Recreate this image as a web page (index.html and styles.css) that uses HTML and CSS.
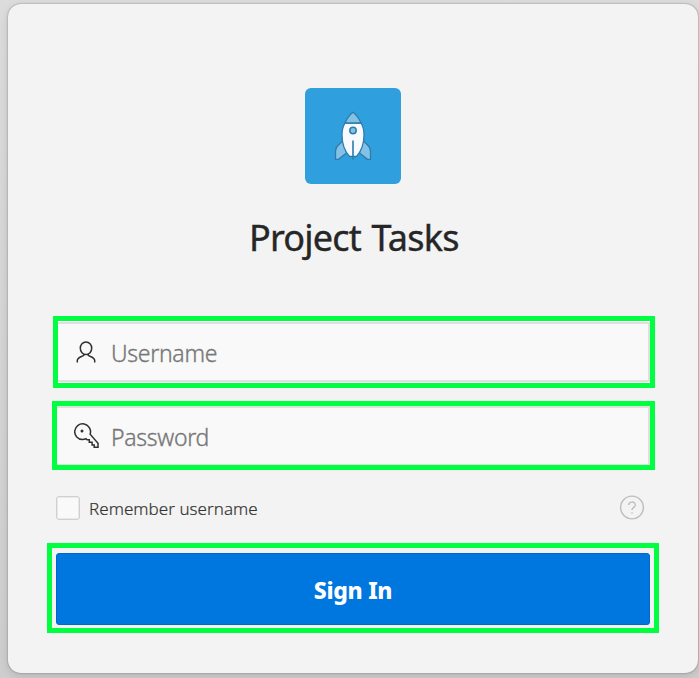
FILE: index.html
```html
<!DOCTYPE html>
<html lang="en">
<head>
<meta charset="utf-8">
<title>Project Tasks</title>
<link rel="stylesheet" href="styles.css">
</head>
<body>
<main class="card">
  <div class="logo">
    <svg width="40" height="52" viewBox="0 0 40 52" stroke="#2b7eab" stroke-width="1.3" stroke-linejoin="miter">
      <path d="M10.5 30 5 35.5Q2.5 38 2.5 41V49.3H5.5L13.5 43Z" fill="#84c1e7"/>
      <path d="M29.500 30 35 35.500Q37.500 38 37.500 41V49.300H34.500L26.500 43Z" fill="#84c1e7"/>
      <path d="M12 13Q9 18 9 25C9 35 12.500 42 16.500 46.500H23.500C27.500 42 31 35 31 25Q31 18 28 13Z" fill="#f7fbff"/>
      <path d="M12 13Q15 6 20 2.300Q25 6 28 13Z" fill="#84c1e7"/>
      <circle cx="20" cy="20.500" r="3.200" fill="#84c1e7" stroke-width="1.500"/>
      <path d="M20 30.500V49.500" fill="none" stroke-width="1.600"/>
    </svg>
  </div>
  <h1 class="title">Project Tasks</h1>
  <form class="form">
    <label class="frame user">
      <span class="field">
        <svg class="icon" width="26" height="26" viewBox="0 0 26 26"><ellipse cx="13" cy="8.300" rx="5.700" ry="6.300"/><path d="M10.800 14.100V15.300C7 17.300 4.300 17.800 4.300 20.500V22.500M15.200 14.100V15.300C19 17.300 21.700 17.800 21.700 20.500V22.500"/></svg>
        <span class="hint">Username</span>
      </span>
    </label>
    <label class="frame pass">
      <span class="field">
        <svg class="icon" width="26" height="26" viewBox="0 0 26 26"><path d="M16.100 11.200A7.900 7.900 0 1 0 8.600 16.600Q10.600 16.600 12 15.700L13 16.700H15.300V19.200H18.100V22H20.200V24.200H24V20.300Z"/><circle class="dot" cx="8" cy="8" r="1.500"/></svg>
        <span class="hint">Password</span>
      </span>
    </label>
    <div class="options">
      <span class="check"></span>
      <span class="remember">Remember username</span>
      <svg class="help" width="26" height="26" viewBox="0 0 26 26"><circle cx="13" cy="12.500" r="11.400"/><path d="M9.700 10.100C9.700 6.100 16.300 6.100 16.300 9.900C16.300 12.300 13 12.500 13 15"/><path d="M13 17.200V18.500"/></svg>
    </div>
    <div class="frame action"><button class="signin" type="button">Sign In</button></div>
  </form>
</main>
</body>
</html>
```
FILE: styles.css
```css
* { box-sizing: border-box; }
body {
  margin: 0;
  height: 678px;
  padding: 4px 1px 5px 8px;
  overflow: hidden;
  background: linear-gradient(#dcdcdc, #cecece);
  font-family: "Noto Sans", "Open Sans", sans-serif;
}
.card {
  height: 669px;
  padding-top: 84px;
  border-radius: 13px;
  background: #f3f3f3;
  box-shadow: 0 0 2px rgba(0,0,0,.4), 0 3px 10px rgba(0,0,0,.12);
}
.logo {
  width: 96px;
  height: 96px;
  margin-left: 297px;
  padding: 22px 28px;
  border-radius: 6px;
  background: #309fdd;
}
.logo svg { display: block; }
.title {
  margin: 29px 0 0 241px;
  width: 220px;
  height: 49px;
  color: #262626;
  font-size: 36px;
  font-weight: 400;
  -webkit-text-stroke: .4px #262626;
  line-height: 49px;
  letter-spacing: -.8px;
  word-spacing: 2px;
  white-space: nowrap;
}
.form { margin: 54px 0 0 39px; }
.frame { display: block; border: 5px solid #00ff40; }
.user { width: 602px; height: 72px; margin-left: 6px; padding: 1px 0; background: #fff; }
.pass { width: 603px; height: 69px; margin: 13px 0 0 5px; }
.field {
  display: flex;
  align-items: center;
  height: 60px;
  padding: 2px 0 0 15px;
  border: 2px solid #dfdfdf;
  border-left: 0;
  background: #f9f9f9;
}
.pass .field { height: 59px; padding-left: 17px; border-bottom-width: 1px; }
.icon { fill: none; stroke: #303030; stroke-width: 1.5; }
.user .icon { margin-top: -1px; }
.pass .icon { margin-top: -3px; }
.icon .dot { fill: #303030; stroke: none; }
.hint {
  margin-left: 12px;
  color: #777;
  font-size: 23px;
  font-weight: 300;
  -webkit-text-stroke: .35px #777;
  line-height: 34px;
  letter-spacing: -.3px;
}
.pass .hint { margin-left: 11px; }
.options {
  display: flex;
  align-items: center;
  width: 636px;
  height: 73px;
  margin-left: 9px;
  padding-top: 3px;
}
.check { width: 24px; height: 24px; border: 1px solid #d0d0d0; border-radius: 3px; background: #f9f9f9; box-shadow: inset 0 0 0 1px #e9e9e9; }
.remember { margin-left: 9px; color: #333; font-size: 17px; font-weight: 300; -webkit-text-stroke: .2px #333; line-height: 24px; letter-spacing: .04px; white-space: nowrap; padding-top: 1px; }
.help { margin-left: auto; margin-right: 47px; fill: none; stroke: #bebebe; stroke-width: 1.4; }
.action { width: 612px; height: 90px; padding: 5px 4px 3px; }
.signin {
  display: block;
  width: 594px;
  height: 72px;
  padding: 1px 0 0;
  border: 1px solid #0068c9;
  border-radius: 3px;
  background: #0076df;
  color: #fff;
  font-family: inherit;
  font-size: 23px;
  font-weight: 800;
  letter-spacing: -.3px;
}
```
